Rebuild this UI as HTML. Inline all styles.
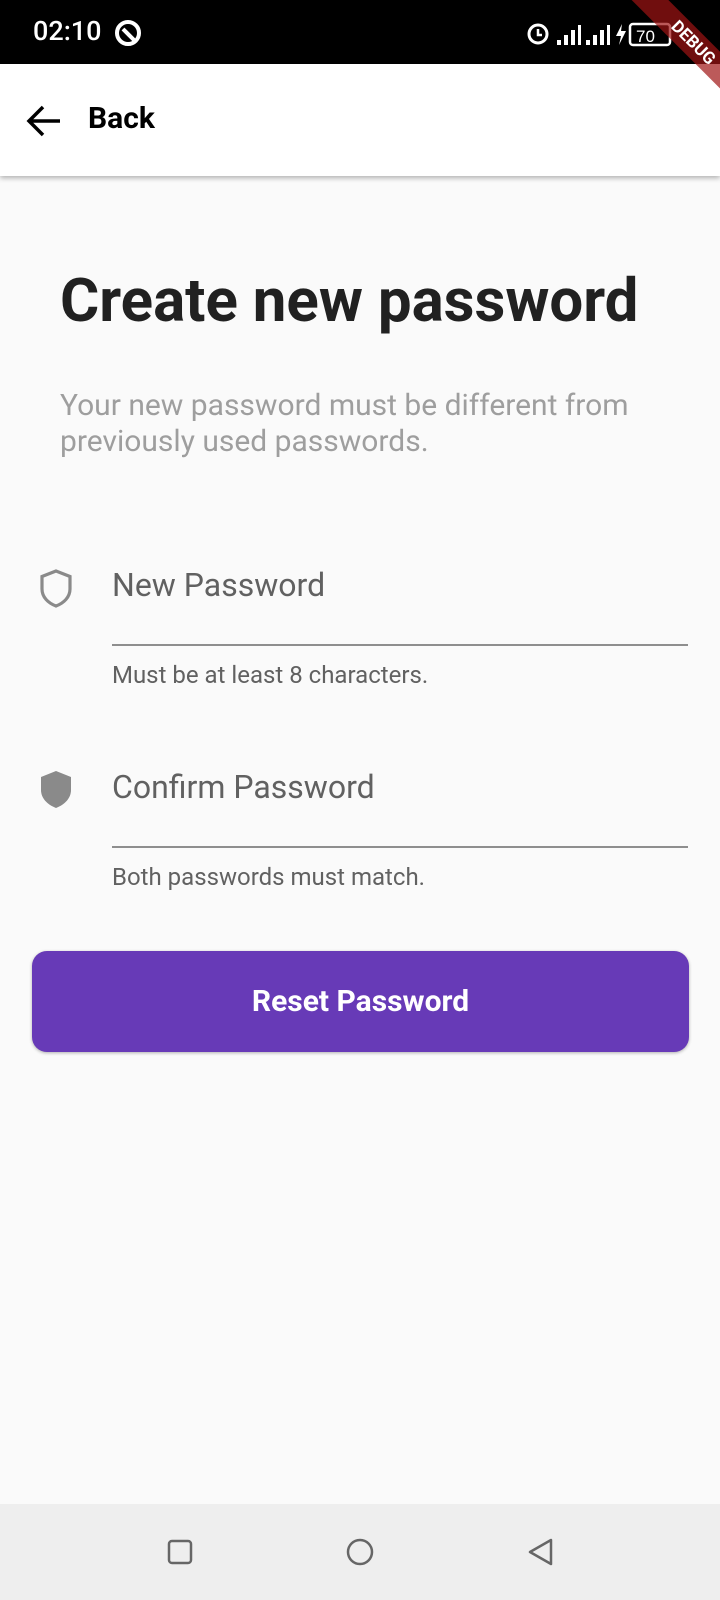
<!DOCTYPE html>
<html><head><meta charset="utf-8"><style>
*{margin:0;padding:0;box-sizing:border-box}
body{width:720px;height:1600px;background:#fafafa;font-family:"Roboto","Liberation Sans",sans-serif;position:relative;overflow:hidden}
.abs{position:absolute}
</style></head><body>
<div class="abs" style="left:0;top:0;width:720px;height:64px;background:#000"></div>
<div class="abs" style="left:33px;top:15px;color:#fff;font-size:27px;font-weight:500;">02:10</div>
<svg class="abs" style="left:114px;top:19px" width="30" height="30" viewBox="0 0 30 30"><circle cx="14" cy="14" r="11" fill="none" stroke="#fff" stroke-width="4"/><path d="M9 10 L20 21" stroke="#fff" stroke-width="4"/></svg>
<svg class="abs" style="left:524px;top:18px" width="170" height="30" viewBox="0 0 170 30">
<circle cx="14" cy="16" r="9" fill="none" stroke="#fff" stroke-width="3"/><path d="M14 11v6h4" stroke="#fff" stroke-width="2.5" fill="none"/>
<rect x="33" y="22" width="4" height="5" fill="#fff"/><rect x="40" y="17" width="4" height="10" fill="#fff"/><rect x="47" y="12" width="4" height="15" fill="#fff"/><rect x="54" y="7" width="3" height="20" fill="#fff"/>
<rect x="62" y="22" width="4" height="5" fill="#fff"/><rect x="69" y="17" width="4" height="10" fill="#fff"/><rect x="76" y="12" width="4" height="15" fill="#fff"/><rect x="83" y="7" width="3" height="20" fill="#fff"/>
<path d="M98 6 L92 18 H97 L95 27 L102 13 H97 Z" fill="#fff"/>
<rect x="106" y="6" width="40" height="21" rx="3" fill="none" stroke="#fff" stroke-width="2.5"/>
<text x="112" y="24" fill="#fff" font-size="17" font-family="Liberation Sans">70</text></svg>
<div class="abs" style="left:0;top:64px;width:720px;height:112px;background:#fff;box-shadow:0 2px 5px rgba(0,0,0,.3)"></div>
<svg class="abs" style="left:26px;top:104px" width="36" height="34" viewBox="0 0 36 34"><path d="M34 17 H4 M17 3 L3 17 L17 31" stroke="#000" stroke-width="3.5" fill="none"/></svg>
<div class="abs" style="left:88px;top:101px;font-size:30px;font-weight:bold;color:#000">Back</div>
<div class="abs" style="left:598px;top:30px;width:190px;height:26px;background:rgba(160,20,20,.7);transform:rotate(45deg);color:#fff;font-size:17px;font-weight:bold;text-align:center;line-height:26px">DEBUG</div>
<div class="abs" style="left:60px;top:265px;font-size:60px;font-weight:bold;color:#212121;white-space:nowrap">Create new password</div>
<div class="abs" style="left:60px;top:388px;width:640px;font-size:30px;line-height:36px;color:#9e9e9e">Your new password must be different from previously used passwords.</div>
<svg class="abs" style="left:39px;top:569px" width="34" height="39" viewBox="0 0 34 39"><path d="M17 2 L31 7.5 V20 C31 28 25 34 17 37 C9 34 3 28 3 20 V7.5 Z" fill="none" stroke="#8a8a8a" stroke-width="3.2"/></svg>
<div class="abs" style="left:112px;top:566px;font-size:32px;color:#616161">New Password</div>
<div class="abs" style="left:112px;top:644px;width:576px;height:2px;background:#8e8e8e"></div>
<div class="abs" style="left:112px;top:661px;font-size:24px;color:#616161">Must be at least 8 characters.</div>
<svg class="abs" style="left:39px;top:770px" width="34" height="39" viewBox="0 0 34 39"><path d="M17 1 L32 7 V20 C32 28 26 34.5 17 38 C8 34.5 2 28 2 20 V7 Z" fill="#8a8a8a"/></svg>
<div class="abs" style="left:112px;top:768px;font-size:32px;color:#616161">Confirm Password</div>
<div class="abs" style="left:112px;top:846px;width:576px;height:2px;background:#8e8e8e"></div>
<div class="abs" style="left:112px;top:863px;font-size:24px;color:#616161">Both passwords must match.</div>
<div class="abs" style="left:32px;top:951px;width:657px;height:101px;border-radius:15px;background:#673ab7;box-shadow:0 1px 3px rgba(0,0,0,.3);color:#fff;font-size:30px;font-weight:bold;text-align:center;line-height:101px">Reset Password</div>
<div class="abs" style="left:0;top:1504px;width:720px;height:96px;background:#eeeeee"></div>
<svg class="abs" style="left:0;top:1530px" width="720" height="44" viewBox="0 0 720 44">
<rect x="169" y="11" width="22" height="22" rx="3" fill="none" stroke="#666" stroke-width="2.5"/>
<circle cx="360" cy="22" r="12" fill="none" stroke="#666" stroke-width="2.5"/>
<path d="M551 10 V34 L530 22 Z" fill="none" stroke="#666" stroke-width="2.5" stroke-linejoin="round"/>
</svg>
</body></html>
